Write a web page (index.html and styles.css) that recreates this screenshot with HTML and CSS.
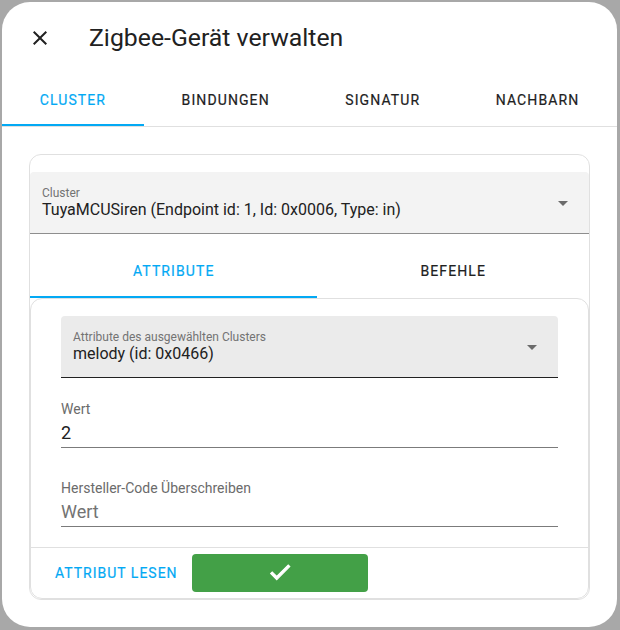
FILE: index.html
```html
<!DOCTYPE html>
<html lang="de">
<head>
<meta charset="utf-8">
<title>Zigbee-Gerät verwalten</title>
<link rel="stylesheet" href="styles.css">
</head>
<body>
<div class="dialog">
  <header class="dlg-header">
    <button class="icon-btn" aria-label="Schließen">
      <svg viewBox="0 0 24 24"><path d="M19,6.41L17.59,5L12,10.59L6.41,5L5,6.41L10.59,12L5,17.59L6.41,19L12,13.41L17.59,19L19,17.59L13.41,12L19,6.41Z"/></svg>
    </button>
    <h1 class="title">Zigbee-Gerät verwalten</h1>
  </header>
  <nav class="tabs main-tabs">
    <div class="tab active">Cluster</div>
    <div class="tab">Bindungen</div>
    <div class="tab">Signatur</div>
    <div class="tab">Nachbarn</div>
  </nav>
  <div class="content">
    <section class="card">
      <div class="select select-light">
        <div class="select-text">
          <div class="select-label">Cluster</div>
          <div class="select-value">TuyaMCUSiren (Endpoint id: 1, Id: 0x0006, Type: in)</div>
        </div>
        <svg class="arrow" viewBox="0 0 24 24"><path d="M7 10l5 5 5-5z"/></svg>
      </div>
      <nav class="tabs sub-tabs">
        <div class="tab active">Attribute</div>
        <div class="tab">Befehle</div>
      </nav>
      <div class="inner-card">
        <div class="inner-body">
          <div class="select select-dark">
            <div class="select-text">
              <div class="select-label">Attribute des ausgewählten Clusters</div>
              <div class="select-value">melody (id: 0x0466)</div>
            </div>
            <svg class="arrow" viewBox="0 0 24 24"><path d="M7 10l5 5 5-5z"/></svg>
          </div>
          <div class="field">
            <div class="field-label">Wert</div>
            <div class="field-value">2</div>
          </div>
          <div class="field">
            <div class="field-label">Hersteller-Code Überschreiben</div>
            <div class="field-value placeholder">Wert</div>
          </div>
        </div>
        <div class="actions">
          <button class="text-btn">Attribut lesen</button>
          <button class="ok-btn" aria-label="Schreiben">
            <svg viewBox="0 0 24 24"><path d="M9 16.17L4.83 12l-1.42 1.41L9 19 21 7l-1.41-1.41z"/></svg>
          </button>
        </div>
      </div>
    </section>
  </div>
</div>
</body>
</html>
```

FILE: styles.css
```css
* { box-sizing: border-box; }
html, body { margin: 0; }
body {
  background: #a8a8a8;
  padding: 2px;
  font-family: Roboto, "Noto Sans", "Liberation Sans", sans-serif;
  color: #212121;
}
.dialog {
  width: 615px;
  height: 625px;
  background: #fff;
  border-radius: 28px;
  overflow: hidden;
  display: flex;
  flex-direction: column;
}
.dlg-header {
  height: 76px;
  flex: none;
  display: flex;
  align-items: center;
  padding: 0 0 4px 26px;
}
.icon-btn {
  width: 24px;
  height: 24px;
  padding: 0;
  border: 0;
  background: none;
  display: flex;
}
.icon-btn svg { width: 24px; height: 24px; fill: #212121; }
.title {
  margin: 0 0 0 37px;
  font-size: 24.8px;
  font-weight: 400;
  line-height: 32px;
  color: #212121;
}
.tabs { display: flex; flex: none; }
.main-tabs { border-bottom: 1px solid #e0e0e0; }
.tab {
  flex: 1 1 auto;
  height: 48px;
  display: flex;
  align-items: center;
  justify-content: center;
  text-transform: uppercase;
  font-size: 14px;
  font-weight: 400;
  -webkit-text-stroke: 0.2px currentColor;
  letter-spacing: 1.1px;
  color: #212121;
  border-bottom: 2px solid transparent;
  padding-bottom: 2px;
}
.tab.active { color: #03a9f4; border-bottom-color: #03a9f4; }
.sub-tabs { margin-top: 16px; }
.sub-tabs .tab { padding-bottom: 4px; }

.content { padding: 27px 27px 0; }
.card {
  border: 1px solid #e0e0e0;
  border-radius: 12px;
  padding-top: 17px;
}
.select {
  height: 62px;
  display: flex;
  align-items: center;
  padding: 0 14px 0 12px;
  border-radius: 4px 4px 0 0;
}
.select-light { background: #f3f3f3; border-bottom: 1px solid #8e8e8e; }
.select-dark { background: #ebebeb; border-bottom: 1px solid #212121; }
.select-text { flex: 1; align-self: stretch; padding-top: 14px; }
.select-label { font-size: 12px; line-height: 14px; color: #737373; }
.select-value { font-size: 16px; line-height: 20px; color: #212121; }
.arrow { width: 24px; height: 24px; fill: #6b6b6b; flex: none; }

.inner-card {
  border: 1px solid #e0e0e0;
  border-radius: 12px;
}
.inner-body { padding: 17px 30px 20px; }
.field {
  margin-top: 22px;
  border-bottom: 1px solid #7b7b7b;
  padding-bottom: 2px;
}
.field + .field { margin-top: 31px; }
.field-label { font-size: 14px; line-height: 18px; color: #6b6b6b; }
.field-value { font-size: 18px; line-height: 24px; margin-top: 3px; color: #212121; }
.field-value.placeholder { color: #737373; }

.actions {
  border-top: 1px solid #e0e0e0;
  padding: 6px 0 6px 24px;
  display: flex;
  align-items: center;
}
.text-btn {
  font-family: inherit;
  font-size: 14px;
  font-weight: 400;
  -webkit-text-stroke: 0.2px currentColor;
  letter-spacing: 1px;
  text-transform: uppercase;
  color: #03a9f4;
  background: none;
  border: 0;
  padding: 0;
}
.ok-btn {
  margin-left: 14px;
  width: 176px;
  height: 38px;
  background: #43a047;
  border: 0;
  border-radius: 4px;
  display: flex;
  align-items: center;
  justify-content: center;
  padding: 0 0 3px;
}
.ok-btn svg { width: 26px; height: 26px; fill: #fff; stroke: #fff; stroke-width: 1.1; stroke-linejoin: miter; }
```
